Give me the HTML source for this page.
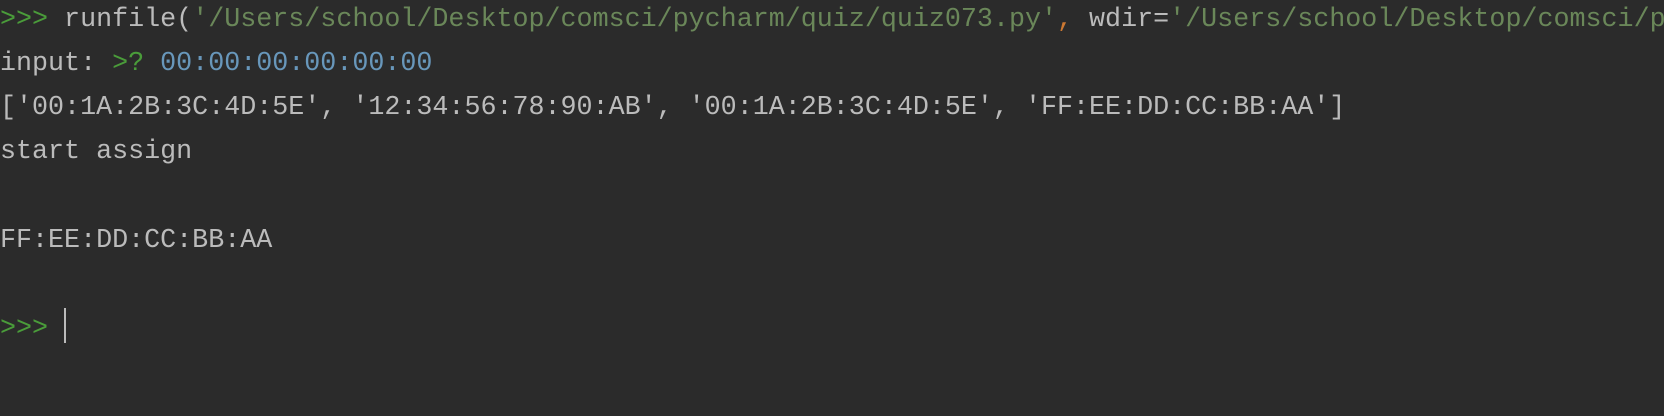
<!DOCTYPE html>
<html><head><meta charset="utf-8"><style>
html,body{margin:0;padding:0;background:#2b2b2b;width:1664px;height:416px;overflow:hidden}
.wrap{position:absolute;left:0;top:0;width:1664px;height:416px;overflow:hidden}
pre{margin:0;position:absolute;top:-2.5px;left:0;font-family:"Liberation Mono","DejaVu Sans Mono",monospace;font-size:26.7px;line-height:44.2px;color:#bbbbbb;white-space:pre}
.g{color:#4a9c3a}.s{color:#6a8759}.b{color:#6897bb}.o{color:#cc7832}
.cur{display:inline-block;width:2px;height:35px;background:#bbbbbb;vertical-align:-8px}
</style></head><body><div class="wrap">
<pre><span class="g">&gt;&gt;&gt;</span> runfile(<span class="s">'/Users/school/Desktop/comsci/pycharm/quiz/quiz073.py'</span><span class="o">,</span> wdir=<span class="s">'/Users/school/Desktop/comsci/pycharm/quiz'</span>)
input: <span class="g">&gt;?</span> <span class="b">00:00:00:00:00:00</span>
['00:1A:2B:3C:4D:5E', '12:34:56:78:90:AB', '00:1A:2B:3C:4D:5E', 'FF:EE:DD:CC:BB:AA']
start assign

FF:EE:DD:CC:BB:AA

<span class="g">&gt;&gt;&gt;</span> <span class="cur"></span></pre>
</div></body></html>
